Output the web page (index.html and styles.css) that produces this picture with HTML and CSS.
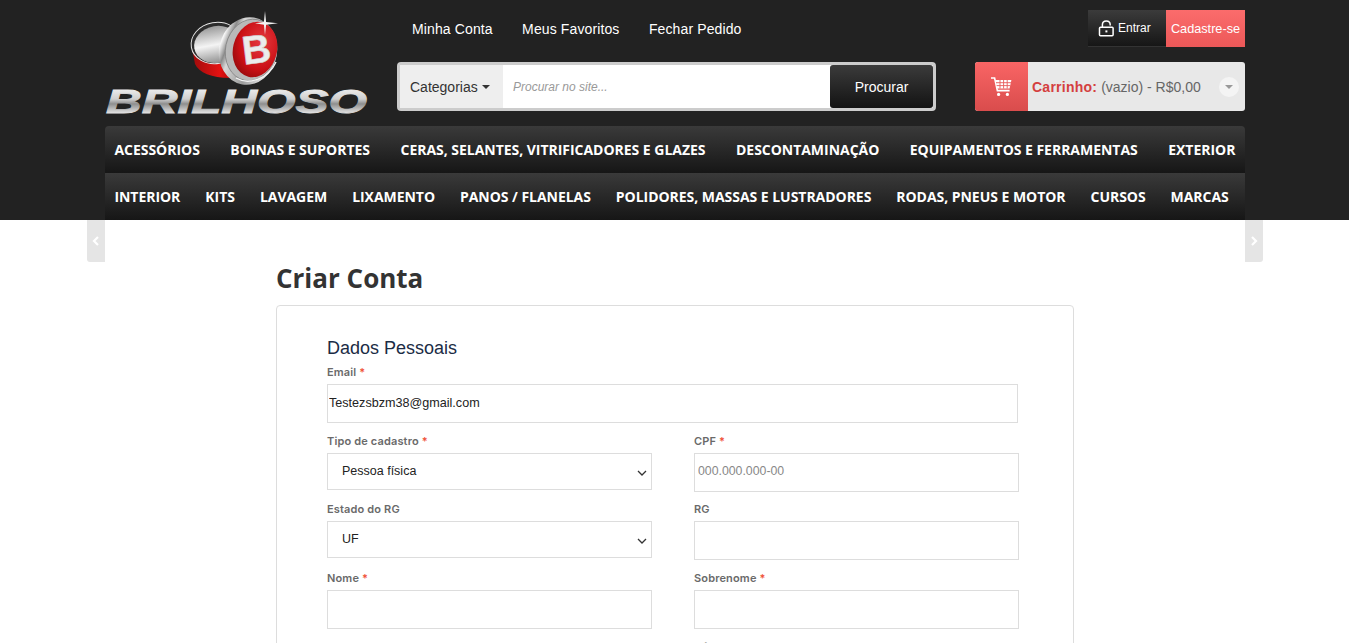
FILE: index.html
```html
<!DOCTYPE html>
<html lang="pt-BR">
<head>
    <meta charset="UTF-8">
    <meta name="viewport" content="width=device-width, initial-scale=1.0">
    <title>Brilhoso - Criar Conta</title>
    <link rel="stylesheet" href="styles.css">
</head>
<body>
    <div class="page">
        <header class="site-header">
            <div class="header-top">
                <a class="logo" href="#" aria-label="Brilhoso">
                    <svg width="264" height="106" viewBox="105 10 264 106">
                        <defs>
                            <linearGradient id="silver" gradientUnits="userSpaceOnUse" x1="0" y1="89" x2="0" y2="113">
                                <stop offset="0" stop-color="#ededed"/>
                                <stop offset="0.42" stop-color="#cfcfcf"/>
                                <stop offset="0.62" stop-color="#8e8e8e"/>
                                <stop offset="1" stop-color="#e2e2e2"/>
                            </linearGradient>
                            <linearGradient id="ring" x1="0" y1="0" x2="1" y2="0.25">
                                <stop offset="0" stop-color="#c4c4c4"/>
                                <stop offset="0.12" stop-color="#f6f6f6"/>
                                <stop offset="0.24" stop-color="#8b8b8b"/>
                                <stop offset="0.34" stop-color="#d8d8d8"/>
                                <stop offset="0.7" stop-color="#9c9c9c"/>
                                <stop offset="1" stop-color="#e6e6e6"/>
                            </linearGradient>
                            <linearGradient id="lid" x1="0" y1="0" x2="0" y2="1">
                                <stop offset="0" stop-color="#9a9a9a"/>
                                <stop offset="0.5" stop-color="#f4f4f4"/>
                                <stop offset="1" stop-color="#8f8f8f"/>
                            </linearGradient>
                            <linearGradient id="redBody" x1="0" y1="0" x2="1" y2="0">
                                <stop offset="0" stop-color="#a00b0b"/>
                                <stop offset="0.55" stop-color="#e31212"/>
                                <stop offset="1" stop-color="#8c0808"/>
                            </linearGradient>
                            <radialGradient id="redFace" cx="0.6" cy="0.35" r="0.75">
                                <stop offset="0" stop-color="#e4393f"/>
                                <stop offset="0.65" stop-color="#cb1015"/>
                                <stop offset="1" stop-color="#8a0a0c"/>
                            </radialGradient>
                        </defs>
                        <!-- back of the can -->
                        <path d="M192 48 L195 64 C199 73 214 79 234 78 L242 60 L222 30 Z" fill="url(#redBody)"/>
                        <ellipse cx="216" cy="43" rx="25" ry="20.5" transform="rotate(-10 216 43)" fill="#2c2c2c" stroke="#e6e6e6" stroke-width="1"/>
                        <ellipse cx="217" cy="44.5" rx="23" ry="18.5" transform="rotate(-10 217 44.5)" fill="url(#lid)"/>
                        <!-- lid -->
                        <ellipse cx="248" cy="51" rx="29" ry="34" transform="rotate(10 248 51)" fill="url(#ring)"/>
                        <ellipse cx="251" cy="50" rx="25.5" ry="31" transform="rotate(12 251 50)" fill="#b9b9b9" stroke="#7c7c7c" stroke-width="0.7"/>
                        <ellipse cx="255" cy="49.5" rx="22" ry="28" transform="rotate(14 255 49.5)" fill="url(#redFace)"/>
                        <path d="M236 78 C248 85 268 80 276 62" fill="none" stroke="#f3f3f3" stroke-width="1.4"/>
                        <text class="logo-letter" x="242" y="63" transform="rotate(-7 257 49)">B</text>
                        <!-- shine -->
                        <path d="M265 11 L266.1 21.9 L278 23.3 L266.1 24.7 L265 35 L263.9 24.7 L255 23.3 L263.9 21.9 Z" fill="#f4f4f4"/>
                        <text class="logo-word" x="106" y="113" textLength="261" lengthAdjust="spacingAndGlyphs">BRILHOSO</text>
                    </svg>
                </a>

                <div class="header-middle">
                    <nav class="top-links">
                        <a href="#">Minha Conta</a>
                        <a href="#">Meus Favoritos</a>
                        <a href="#">Fechar Pedido</a>
                    </nav>
                    <form class="search-box">
                        <div class="search-cat">Categorias <span class="caret"></span></div>
                        <input class="search-input" type="text" placeholder="Procurar no site...">
                        <button class="search-btn" type="button">Procurar</button>
                    </form>
                </div>

                <div class="header-right">
                    <div class="auth-links">
                        <a class="btn-login" href="#">
                            <svg width="17" height="17" viewBox="0 0 17 17" fill="none" stroke="#fff" stroke-width="1.5">
                                <rect x="1.5" y="7.2" width="13.6" height="8.6" rx="1"/>
                                <path d="M4.4 7V4.8C4.4 2.5 6.2 1 8.3 1C10.5 1 12.2 2.5 12.2 4.8V5.4"/>
                                <rect x="7.4" y="10.4" width="2" height="2" fill="#fff" stroke="none"/>
                            </svg>
                            Entrar
                        </a>
                        <a class="btn-register" href="#">Cadastre-se</a>
                    </div>
                    <div class="cart-box">
                        <div class="cart-icon">
                            <svg width="21" height="20" viewBox="0 0 21 20" fill="#fff">
                                <path d="M0 1H3.6L6.4 13.6H18.6" fill="none" stroke="#fff" stroke-width="1.6"/>
                                <path d="M4.6 3H20.4L18.6 11.6H6.2Z"/>
                                <path d="M5 5.7H20M5.6 8.6H19.4M9 3V11.6M12.6 3V11.6M16.2 3V11.6" stroke="#e85a5a" stroke-width="0.9"/>
                                <circle cx="7.6" cy="17.4" r="1.6"/>
                                <circle cx="16.4" cy="17.4" r="1.6"/>
                            </svg>
                        </div>
                        <div class="cart-text"><b>Carrinho:</b> (vazio) - R$0,00</div>
                        <span class="cart-toggle"><span class="caret"></span></span>
                    </div>
                </div>
            </div>

            <nav class="main-menu">
                <ul class="menu-row row-one">
                    <li><a href="#">Acessórios</a></li>
                    <li><a href="#">Boinas e Suportes</a></li>
                    <li><a href="#">Ceras, Selantes, Vitrificadores e Glazes</a></li>
                    <li><a href="#">Descontaminação</a></li>
                    <li><a href="#">Equipamentos e Ferramentas</a></li>
                    <li><a href="#">Exterior</a></li>
                </ul>
                <ul class="menu-row row-two">
                    <li><a href="#">Interior</a></li>
                    <li><a href="#">Kits</a></li>
                    <li><a href="#">Lavagem</a></li>
                    <li><a href="#">Lixamento</a></li>
                    <li><a href="#">Panos / Flanelas</a></li>
                    <li><a href="#">Polidores, Massas e Lustradores</a></li>
                    <li><a href="#">Rodas, Pneus e Motor</a></li>
                    <li><a href="#">Cursos</a></li>
                    <li><a href="#">Marcas</a></li>
                </ul>
            </nav>
        </header>

        <a class="side-arrow arrow-left" href="#">
            <svg width="8" height="10" viewBox="0 0 8 10" fill="none" stroke="#fff" stroke-width="2.2"><path d="M6 1L2 5L6 9"/></svg>
        </a>
        <a class="side-arrow arrow-right" href="#">
            <svg width="8" height="10" viewBox="0 0 8 10" fill="none" stroke="#fff" stroke-width="2.2"><path d="M2 1L6 5L2 9"/></svg>
        </a>

        <main class="content">
            <h1>Criar Conta</h1>
            <form class="card">
                <h2>Dados Pessoais</h2>
                <div class="form-group email-group">
                    <label>Email <span class="req">*</span></label>
                    <input class="field" type="email" value="Testezsbzm38@gmail.com">
                </div>
                <div class="form-grid">
                    <div class="form-group">
                        <label>Tipo de cadastro <span class="req">*</span></label>
                        <select class="field-select"><option>Pessoa física</option></select>
                    </div>
                    <div class="form-group">
                        <label>CPF <span class="req">*</span></label>
                        <input class="field cpf" type="text" placeholder="000.000.000-00">
                    </div>
                    <div class="form-group">
                        <label>Estado do RG</label>
                        <select class="field-select"><option>UF</option></select>
                    </div>
                    <div class="form-group">
                        <label>RG</label>
                        <input class="field" type="text">
                    </div>
                    <div class="form-group">
                        <label>Nome <span class="req">*</span></label>
                        <input class="field" type="text">
                    </div>
                    <div class="form-group">
                        <label>Sobrenome <span class="req">*</span></label>
                        <input class="field" type="text">
                    </div>
                    <div class="form-group right-col">
                        <label>Gênero</label>
                    </div>
                </div>
            </form>
        </main>
    </div>
</body>
</html>
```

FILE: styles.css
```css
* {
    margin: 0;
    padding: 0;
    box-sizing: border-box;
}

html, body {
    height: 643px;
    overflow: hidden;
    background: white;
}

body {
    font-family: "Liberation Sans", Arial, sans-serif;
    font-size: 14px;
    color: #333;
}

a {
    text-decoration: none;
}

.page {
    position: relative;
    width: 1349px;
    height: 643px;
    overflow: hidden;
}

/* header */
.site-header {
    background: #222;
    height: 220px;
    padding: 0 104px 0 105px;
}

.header-top {
    display: flex;
    height: 126px;
}

.logo {
    display: block;
    width: 292px;
    padding-top: 10px;
}

.logo svg {
    display: block;
    overflow: visible;
}

.logo-word {
    font-family: "Liberation Sans", sans-serif;
    font-weight: bold;
    font-style: italic;
    font-size: 33px;
    fill: url(#silver);
    stroke: url(#silver);
    stroke-width: 0.9px;
}

.logo-letter {
    font-family: "Liberation Sans", sans-serif;
    font-weight: bold;
    font-size: 40px;
    fill: #ececec;
    stroke: #cfcfcf;
    stroke-width: 0.6px;
}

.header-middle {
    width: 539px;
    margin-right: 39px;
    padding-top: 10px;
}

.top-links {
    display: flex;
    gap: 29.4px;
    height: 37px;
    align-items: center;
    padding-left: 15px;
    margin-bottom: 15px;
}

.top-links a {
    color: white;
    font-size: 14px;
    letter-spacing: 0.12px;
}

.search-box {
    display: flex;
    height: 49px;
    border: 3px solid #ccc;
    border-radius: 4px;
    background: white;
}

.search-cat {
    width: 103px;
    padding-left: 10px;
    background: #eee;
    color: #333;
    display: flex;
    align-items: center;
    gap: 4px;
}

.caret {
    display: inline-block;
    width: 0;
    height: 0;
    border-top: 4px solid #333;
    border-left: 4px solid transparent;
    border-right: 4px solid transparent;
}

.search-input {
    flex: 1;
    min-width: 0;
    border: none;
    outline: none;
    padding: 0 10px;
    font-family: inherit;
    font-size: 12px;
    font-style: italic;
}

.search-input::placeholder {
    color: #999;
}

.search-btn {
    width: 103px;
    margin-left: 2px;
    border: none;
    border-radius: 3px;
    background: linear-gradient(#3b3b3b, #131313);
    color: white;
    font-family: inherit;
    font-size: 14px;
}

.header-right {
    width: 270px;
    padding-top: 10px;
}

.auth-links {
    display: flex;
    justify-content: flex-end;
    height: 37px;
    margin-bottom: 15px;
    font-size: 12px;
}

.auth-links a {
    color: white;
    display: flex;
    align-items: center;
}

.btn-login {
    width: 78px;
    gap: 3px;
    padding-left: 10px;
    background: linear-gradient(#3b3b3b, #161616);
    border-bottom: 1px solid #333;
}

.btn-register {
    width: 79px;
    justify-content: center;
    font-size: 12.7px;
    background: linear-gradient(#fb6c6c, #ec5858);
}

.cart-box {
    display: flex;
    align-items: center;
    height: 49px;
    background: #e8e8e8;
    border-radius: 3px;
    color: #666;
}

.cart-icon {
    width: 53px;
    height: 49px;
    flex-shrink: 0;
    display: flex;
    align-items: center;
    justify-content: center;
    background: linear-gradient(#f96565, #d94c4c);
    border-radius: 3px 0 0 3px;
}

.cart-text {
    flex: 1;
    padding-left: 4px;
    white-space: nowrap;
}

.cart-text b {
    color: #d43f3f;
    letter-spacing: 0.25px;
}

.cart-toggle {
    width: 20px;
    height: 20px;
    margin-right: 6px;
    border-radius: 50%;
    background: #f4f4f4;
    display: flex;
    align-items: center;
    justify-content: center;
}

.cart-toggle .caret {
    border-top: 4px solid #999;
}

.main-menu {
    border-radius: 4px 4px 0 0;
    overflow: hidden;
}

.menu-row {
    display: flex;
    align-items: center;
    height: 47px;
    list-style: none;
    padding-left: 9.4px;
    background: linear-gradient(#3a3a3a, #161616);
}

.row-one {
    gap: 30.5px;
    letter-spacing: -0.03px;
}

.row-two {
    gap: 25px;
    letter-spacing: -0.04px;
}

.menu-row a {
    color: white;
    font-family: "Open Sans", sans-serif;
    font-weight: 700;
    font-size: 14px;
    text-transform: uppercase;
    white-space: nowrap;
}

.side-arrow {
    position: absolute;
    top: 220px;
    width: 18px;
    height: 42px;
    background: #e5e5e5;
    display: flex;
    align-items: center;
    justify-content: center;
}

.arrow-left {
    left: 87px;
    border-radius: 0 0 0 3px;
}

.arrow-right {
    left: 1245px;
    border-radius: 0 0 3px 0;
}

/* form */
.content {
    width: 798px;
    margin-left: 276px;
}

h1 {
    font-family: "Open Sans", sans-serif;
    font-weight: 700;
    font-size: 26px;
    line-height: 34px;
    color: #333;
    margin-top: 41px;
    margin-bottom: 10px;
}

.card {
    border: 1px solid #ddd;
    border-radius: 4px;
    padding: 30px 55px 0 50px;
}

h2 {
    font-weight: normal;
    font-size: 18px;
    line-height: 24px;
    color: #1b2c45;
}

.form-group {
    margin-bottom: 12.4px;
}

.email-group {
    margin-top: 6.6px;
    margin-bottom: 13.4px;
    width: 691px;
}

.form-grid {
    display: grid;
    grid-template-columns: 325px 325px;
    column-gap: 42px;
}

.right-col {
    grid-column: 2;
    padding-top: 1px;
}

label {
    display: block;
    height: 17px;
    line-height: 10px;
    font-family: Inter, sans-serif;
    font-size: 11px;
    font-weight: 600;
    letter-spacing: 0.15px;
    color: #6a6a6a;
}

.req {
    color: #f0533a;
}

.field {
    display: block;
    width: 100%;
    height: 39px;
    border: 1px solid #ddd;
    padding: 0 1px 1px;
    font-family: inherit;
    font-size: 12.6px;
    color: #222;
    outline: none;
}

.cpf {
    padding-left: 3px;
    padding-bottom: 3px;
    font-size: 12.3px;
}

.field::placeholder {
    color: #888;
}

.field-select {
    display: block;
    width: 100%;
    height: 37px;
    border: 1px solid #ddd;
    border-radius: 0;
    padding: 0 0 1px 14px;
    appearance: none;
    background: white url("data:image/svg+xml,%3Csvg xmlns='http://www.w3.org/2000/svg' width='10' height='6'%3E%3Cpath d='M1 1l4 4 4-4' fill='none' stroke='%23333' stroke-width='1.3'/%3E%3C/svg%3E") no-repeat 309px 16px;
    font-family: inherit;
    font-size: 12.5px;
    color: #222;
    outline: none;
}
```
